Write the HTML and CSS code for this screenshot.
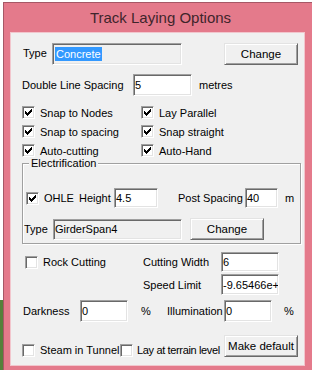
FILE: index.html
```html
<!DOCTYPE html>
<html>
  <head>
    <meta charset="UTF-8">
    <title>Track Laying Options</title>
    <link rel="stylesheet" href="styles.css">
  </head>
  <body>
    <svg class="defs" width="0" height="0">
      <symbol id="tick" viewBox="0 0 11 11">
        <rect x="8" y="2" width="1" height="1"/>
        <rect x="7" y="3" width="2" height="1"/>
        <rect x="2" y="4" width="1" height="1"/>
        <rect x="6" y="4" width="3" height="1"/>
        <rect x="2" y="5" width="2" height="1"/>
        <rect x="5" y="5" width="3" height="1"/>
        <rect x="2" y="6" width="5" height="1"/>
        <rect x="3" y="7" width="3" height="1"/>
        <rect x="4" y="8" width="1" height="1"/>
      </symbol>
    </svg>

    <div class="desktop">
      <!-- strip of the app behind the dialog -->
      <div class="behind">
        <div class="frags"></div>
        <div class="grass"></div>
      </div>

      <div class="window">
        <div class="titlebar">Track Laying Options</div>
        <div class="client">

          <div class="r-type">
            <span class="lbl w29">Type</span>
            <span class="field ro w130"><span class="sel">Concrete</span></span>
            <span class="btn ml42">Change</span>
          </div>

          <div class="r-spacing">
            <span class="lbl w111">Double Line Spacing</span>
            <span class="field w59">5</span>
            <span class="ml7">metres</span>
          </div>

          <div class="checks">
            <label class="chk"><span class="cb"><svg><use href="#tick"/></svg></span><span>Snap to Nodes</span></label>
            <label class="chk"><span class="cb"><svg><use href="#tick"/></svg></span><span>Lay Parallel</span></label>
            <label class="chk"><span class="cb"><svg><use href="#tick"/></svg></span><span>Snap to spacing</span></label>
            <label class="chk"><span class="cb"><svg><use href="#tick"/></svg></span><span>Snap straight</span></label>
            <label class="chk"><span class="cb"><svg><use href="#tick"/></svg></span><span>Auto-cutting</span></label>
            <label class="chk"><span class="cb"><svg><use href="#tick"/></svg></span><span>Auto-Hand</span></label>
          </div>

          <!-- Electrification group -->
          <div class="group">
            <span class="legend">Electrification</span>
            <div class="g-ohle">
              <span class="cb"><svg><use href="#tick"/></svg></span>
              <span class="lbl w35 ml5">OHLE</span>
              <span class="lbl w35">Height</span>
              <span class="field w44">4.5</span>
              <span class="lbl w67 ml20">Post Spacing</span>
              <span class="field w33">40</span>
              <span class="ml7">m</span>
            </div>
            <div class="g-type">
              <span class="lbl w29">Type</span>
              <span class="field ro w129">GirderSpan4</span>
              <span class="btn ml8">Change</span>
            </div>
          </div>

          <div class="rock">
            <div class="rock-left">
              <span class="cb"></span>
              <span class="ml5">Rock Cutting</span>
            </div>
            <div class="rock-right">
              <div class="fr">
                <span class="lbl w78">Cutting Width</span>
                <span class="field w58">6</span>
              </div>
              <div class="fr fr2">
                <span class="lbl w78">Speed Limit</span>
                <span class="field w58">-9.65466e+</span>
              </div>
            </div>
          </div>

          <div class="dark">
            <span class="lbl w57">Darkness</span>
            <span class="field w48">0</span>
            <span class="pct ml13">%</span>
            <span class="lbl w57">Illumination</span>
            <span class="field w48">0</span>
            <span class="ml12">%</span>
          </div>

          <div class="bottom">
            <span class="cb low"></span>
            <span class="lbl w80 ml5 low">Steam in Tunnel</span>
            <span class="cb low"></span>
            <span class="lbl w87 ml4 low tight">Lay at terrain level</span>
            <span class="btn">Make default</span>
          </div>

        </div>
      </div>
    </div>
  </body>
</html>
```

FILE: styles.css
```css
body {
  margin: 0;
  background: #fff;
  font-family: "Liberation Sans", Arial, sans-serif;
  font-size: 11px;
  color: #000;
}
.defs {
  position: absolute;
}
.desktop {
  position: relative;
  width: 312px;
  height: 370px;
  overflow: hidden;
}
.behind {
  width: 3px;
  height: 370px;
  display: flex;
  flex-direction: column;
}
.frags {
  flex: 1;
  background: #fff;
}
.grass {
  height: 70px;
  background: #56803b;
}

/* dialog window */
.window {
  position: absolute;
  left: 3px;
  top: 2px;
  width: 312px;
  height: 376px;
  box-sizing: border-box;
  padding: 0 7px;
  background: #e47a8b;
  border: 1px solid #a65866;
}
.titlebar {
  width: 293px;
  height: 30px;
  line-height: 30px;
  box-sizing: border-box;
  padding-left: 6px;
  text-align: center;
  font-size: 15px;
  color: #3f252b;
}
.client {
  width: 293px;
  height: 332px;
  box-sizing: border-box;
  padding-top: 10px;
  background: #f0f0f0;
  box-shadow: 0 0 0 1px #f2c6cd;
}

/* common controls */
.lbl { display: inline-block; white-space: nowrap; }
.field {
  display: flex;
  align-items: center;
  box-sizing: border-box;
  height: 22px;
  padding-left: 1px;
  background: #fff;
  border: 1px solid;
  border-color: #a0a0a0 #fff #fff #a0a0a0;
  box-shadow: inset 1px 1px 0 #696969, inset -1px -1px 0 #e3e3e3;
  white-space: nowrap;
  overflow: hidden;
}
.field.ro { background: #f0f0f0; }
.sel {
  background: #3399ff;
  color: #fff;
  line-height: 14px;
  padding: 0 1px;
  margin-left: 1px;
}
.btn {
  display: flex;
  align-items: center;
  justify-content: center;
  box-sizing: border-box;
  width: 74px;
  height: 22px;
  background: #f0f0f0;
  border: 1px solid;
  border-color: #e3e3e3 #696969 #696969 #e3e3e3;
  box-shadow: inset 1px 1px 0 #fff, inset -1px -1px 0 #a0a0a0;
  font-size: 11.5px;
}
.cb {
  flex: none;
  display: block;
  width: 13px;
  height: 13px;
  box-sizing: border-box;
  padding: 0;
  background: #fff;
  border: 1px solid;
  border-color: #a0a0a0 #fff #fff #a0a0a0;
  box-shadow: inset 1px 1px 0 #696969, inset -1px -1px 0 #e3e3e3;
}
.cb svg {
  display: block;
  width: 11px;
  height: 11px;
  fill: #000;
}

/* widths and gaps */
.w29 { width: 29px; }
.w33 { width: 33px; height: 20px; }
.w35 { width: 35px; }
.w44 { width: 44px; height: 20px; }
.w48 { width: 48px; }
.w57 { width: 57px; }
.w58 { width: 58px; height: 20px; }
.w59 { width: 59px; }
.w67 { width: 67px; }
.w78 { width: 78px; }
.w80 { width: 80px; }
.w87 { width: 87px; }
.w111 { width: 111px; }
.w129 { width: 129px; height: 21px; }
.w130 { width: 130px; }
.ml4 { margin-left: 4px; }
.ml5 { margin-left: 5px; }
.ml7 { margin-left: 7px; }
.ml8 { margin-left: 8px; }
.ml12 { margin-left: 12px; }
.ml13 { margin-left: 13px; }
.ml20 { margin-left: 20px; }
.ml42 { margin-left: 42px; }

/* rows */
.r-type {
  display: flex;
  align-items: center;
  height: 22px;
  padding-left: 12px;
}
.r-type > .lbl { margin-top: -3px; }
.r-spacing {
  display: flex;
  align-items: center;
  height: 22px;
  margin-top: 9px;
  padding-left: 11px;
}
.checks {
  display: grid;
  grid-template-columns: 119px 1fr;
  grid-auto-rows: 19px;
  margin-top: 7px;
  padding-left: 11px;
}
.chk {
  display: flex;
  align-items: center;
}
.chk .cb + span { margin-left: 5px; }

.group {
  width: 279px;
  height: 81px;
  margin: 3px 0 0 11px;
  box-sizing: border-box;
  border: 1px solid #a0a0a0;
  box-shadow: inset 1px 1px 0 #fff, 1px 1px 0 #fff;
}
.legend {
  display: block;
  width: fit-content;
  margin: -8px 0 0 6px;
  padding: 0 2px;
  line-height: 14px;
  background: #f0f0f0;
}
.g-ohle {
  display: flex;
  align-items: center;
  height: 20px;
  margin-top: 18px;
  padding-left: 3px;
}
.g-type {
  display: flex;
  align-items: center;
  height: 22px;
  margin-top: 10px;
  padding-left: 1px;
}

.rock {
  display: flex;
  margin-top: 8px;
  padding-left: 11px;
}
.rock-left {
  display: flex;
  align-items: center;
  width: 121px;
  height: 20px;
  box-sizing: border-box;
  padding-left: 3px;
}
.fr {
  display: flex;
  align-items: center;
  height: 20px;
}
.fr2 {
  height: 21px;
  margin-top: 2px;
}
.fr2 .field { height: 21px; }

.dark {
  display: flex;
  align-items: center;
  height: 22px;
  margin-top: 5px;
  padding-left: 12px;
}
.pct { width: 13px; margin-right: 13px; }

.bottom {
  display: flex;
  align-items: center;
  height: 22px;
  margin-top: 13px;
  padding-left: 11px;
}
.bottom .low {
  align-self: flex-end;
  line-height: 13px;
}
.tight { letter-spacing: -0.35px; }
```
